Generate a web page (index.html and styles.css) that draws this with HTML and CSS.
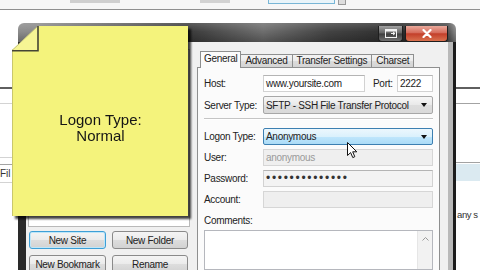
FILE: index.html
```html
<!DOCTYPE html>
<html lang="en">
	<head>
		<meta charset="UTF-8">
		<meta name="viewport" content="width=device-width, initial-scale=1.0">
		<title>Site Manager</title>
		<link rel="stylesheet" href="styles.css">
	</head>

	<body>
		<div class="desktop">
			<!-- bottom edge of the quickconnect bar behind the dialog -->
			<div class="quickbar">
				<span class="qb-host"></span>
				<span class="qb-label"></span>
				<span class="qb-port"></span>
				<span class="qb-btn"></span>
			</div>

			<div class="app">
				<div class="stub stub-left">
					<div class="hl dark l1"></div>
					<div class="hl light l2"></div>
					<div class="hl light l3"></div>
					<div class="hl mid l4"></div>
					<div class="stub-text">Fil</div>
					<div class="hl light l5"></div>
				</div>
				<div class="stub stub-right">
					<div class="hl dark l1"></div>
					<div class="hl mid l2"></div>
					<div class="hl mid r3"></div>
					<div class="band"></div>
					<div class="stub-text r-text">any s</div>
				</div>
			</div>

			<div class="dialog">
				<div class="titlebar">
					<span class="cbtn restore">
						<svg width="12" height="9" viewBox="0 0 12 9">
							<rect x="0.5" y="0.5" width="11" height="8" fill="none" stroke="#f2f2f2"/>
							<rect x="0.5" y="0.5" width="11" height="2" fill="#f2f2f2"/>
							<path d="M6 4.5 L10 4.5 M8 3 L10 4.5 L8 6" stroke="#f2f2f2" fill="none"/>
						</svg>
					</span>
					<span class="cbtn close">
						<svg width="10" height="9" viewBox="0 0 10 9">
							<path d="M1.5 1 L8.5 8 M8.5 1 L1.5 8" stroke="#fff" stroke-width="2.2" stroke-linecap="round"/>
						</svg>
					</span>
				</div>

				<div class="frame">
					<div class="left-pane">
						<div class="tree"></div>
						<div class="btn-grid">
							<button class="btn default">New Site</button>
							<button class="btn">New Folder</button>
							<button class="btn">New Bookmark</button>
							<button class="btn">Rename</button>
						</div>
					</div>

					<div class="right-pane">
						<div class="tabs">
							<span class="tab active">General</span>
							<span class="tab">Advanced</span>
							<span class="tab">Transfer Settings</span>
							<span class="tab">Charset</span>
						</div>
						<div class="tab-panel">
							<div class="row">
								<span class="lbl">Host:</span>
								<span class="input host">www.yoursite.com</span>
								<span class="port-lbl">Port:</span>
								<span class="input">2222</span>
							</div>
							<div class="row tall">
								<span class="lbl">Server Type:</span>
								<span class="select">SFTP - SSH File Transfer Protocol<i class="arrow"></i></span>
							</div>
							<div class="sep"></div>
							<div class="row">
								<span class="lbl">Logon Type:</span>
								<span class="select hover">Anonymous<i class="arrow"></i></span>
							</div>
							<div class="row">
								<span class="lbl">User:</span>
								<span class="input disabled">anonymous</span>
							</div>
							<div class="row">
								<span class="lbl">Password:</span>
								<span class="input soft pw">••••••••••••••</span>
							</div>
							<div class="row">
								<span class="lbl">Account:</span>
								<span class="input disabled"></span>
							</div>
							<div class="comments-lbl">Comments:</div>
							<div class="textarea">
								<div class="vscroll">
									<svg width="7" height="4" viewBox="0 0 7 4">
										<path d="M0.5 3.5 L3.5 0.5 L6.5 3.5" stroke="#9a9a9a" fill="none"/>
									</svg>
								</div>
							</div>
						</div>
					</div>
				</div>
			</div>

			<div class="note">
				<div class="note-paper">Logon Type:<br>Normal</div>
				<svg class="fold" width="27" height="26" viewBox="0 0 27 26">
					<polygon points="0,24.5 26,0 26,24.5" fill="#f6f594"/>
					<path d="M0 24.5 L26 0" stroke="#b4b27a" stroke-width="0.8"/>
					<path d="M26 0 L26 25.5 M0 24.8 L26.5 24.8" stroke="#454535" stroke-width="1.6"/>
				</svg>
			</div>

			<svg class="cursor" width="11" height="17" viewBox="0 0 11 17">
				<path d="M0.5 0.5 L0.5 13.5 L3.6 10.6 L5.8 15.6 L7.8 14.7 L5.7 9.8 L9.8 9.8 Z" fill="#fff" stroke="#111" stroke-width="1"/>
			</svg>
		</div>
	</body>
</html>
```

FILE: styles.css
```css
* {
	box-sizing: border-box;
}

html, body {
	margin: 0;
}

body {
	font-family: "Liberation Sans", Arial, sans-serif;
	font-size: 10px;
	color: #222;
	background-color: #fff;
	overflow: hidden;
}

.desktop {
	position: relative;
	width: 480px;
	height: 270px;
	overflow: hidden;
}

/* background application */
.quickbar {
	height: 10px;
	display: flex;
	align-items: flex-start;
	background-color: #f6f6f6;
	border-bottom: 1px solid #8f8f8f;
}

.qb-host {
	margin-left: 70px;
	width: 50px;
	height: 3px;
	background-color: #cfcfcf;
}

.qb-label {
	margin-left: 80px;
	width: 30px;
	height: 3px;
	background-color: #d2d2d2;
}

.qb-port {
	margin-left: 38px;
	width: 67px;
	height: 4px;
	border: 1px solid #78b6d6;
	border-top: none;
	background-color: #e9f4f9;
}

.qb-btn {
	margin-left: 3px;
	width: 8px;
	height: 5px;
	border: 1px solid #9a9a9a;
	border-top: none;
	background-color: #dedede;
}

.app {
	display: flex;
	justify-content: space-between;
}

.stub-left {
	width: 12px;
}

.stub-right {
	width: 24px;
}

.hl {
	height: 1px;
}

.hl.dark {
	height: 2px;
	background-color: #5f5f5f;
}

.hl.mid {
	background-color: #a3a3a3;
}

.hl.light {
	background-color: #d3d3d3;
}

.l1 { margin-top: 77px; }
.l2 { margin-top: 14px; }
.l3 { margin-top: 53px; }
.l4 { margin-top: 6px; }
.l5 { margin-top: 3px; }
.r3 { margin-top: 58px; }

.stub-text {
	margin-top: 4px;
	line-height: 10px;
	white-space: nowrap;
	color: #333;
}

.band {
	margin-top: 1px;
	height: 17px;
	background-color: #dbeaf1;
}

.r-text {
	margin-top: 29px;
	padding-left: 1px;
	font-size: 9.5px;
	letter-spacing: -0.4px;
}

/* dialog */
.dialog {
	position: absolute;
	left: 18px;
	top: 23px;
	width: 438px;
	height: 262px;
	display: flex;
	flex-direction: column;
	letter-spacing: -0.3px;
}

.titlebar {
	height: 24px;
	display: flex;
	justify-content: flex-end;
	align-items: flex-start;
	gap: 2px;
	padding: 3px 8px 0 0;
	border-radius: 6px 6px 0 0;
	background:
		linear-gradient(to bottom, rgba(255,255,255,.16), rgba(255,255,255,0) 45%, rgba(0,0,0,.25)),
		linear-gradient(to right, #8d8d8d 0, #8a8a8a 5%, #3b3b3b 39%, #6e6e6e 56%, #434343 71%, #2c2c2c 88%, #4a4a4a 98%, #8a8a8a 100%);
}

.cbtn {
	height: 16px;
	display: flex;
	align-items: center;
	justify-content: center;
	border: 1px solid #1e1e1e;
	border-top: none;
	border-radius: 0 0 4px 4px;
}

.cbtn.restore {
	width: 25px;
	background: linear-gradient(#a2a2a2, #626262 48%, #3c3c3c 52%, #707070);
}

.cbtn.close {
	width: 43px;
	background: linear-gradient(#eaaa9c, #d66b5b 45%, #c33f2a 52%, #d9714f);
}

.frame {
	flex: 1;
	display: flex;
	background-color: #f0f0f0;
	border-left: 8px solid #2a2a2a;
	border-right: 3px solid #1c1c1c;
	padding-right: 5px;
	box-shadow: inset -5px 0 #b9b9b9;
}

.left-pane {
	width: 167px;
	padding: 7px 0 0 2px;
}

.tree {
	width: 162px;
	height: 178px;
	background-color: #fff;
	border: 1px solid #b9b9b9;
}

.btn-grid {
	display: grid;
	grid-template-columns: 77px 76px;
	column-gap: 6px;
	row-gap: 6px;
	margin: 4px 0 0 1px;
}

.btn {
	height: 18px;
	padding: 0;
	font-family: inherit;
	font-size: 10px;
	letter-spacing: inherit;
	color: #222;
	border: 1px solid #8a8a8a;
	border-radius: 3px;
	background: linear-gradient(#f4f4f4, #ebebeb 48%, #dddddd 52%, #d2d2d2);
}

.btn.default {
	border-color: #3e9fd6;
	box-shadow: inset 0 0 0 1px #bfe6f8;
}

.right-pane {
	flex: 1;
	padding: 9px 8px 0 4px;
}

.tabs {
	display: flex;
	align-items: flex-end;
	height: 16px;
	margin-left: 3px;
}

.tab {
	height: 13px;
	padding: 0 4px;
	line-height: 12px;
	white-space: nowrap;
	border: 1px solid #8e8f8f;
	border-left: none;
	border-bottom: none;
	background: linear-gradient(#f3f3f3, #ebebeb 50%, #dcdcdc 51%, #d4d4d4);
}

.tab.active {
	position: relative;
	z-index: 1;
	height: 17px;
	margin-bottom: -1px;
	padding: 0 3px;
	line-height: 14px;
	border-left: 1px solid #8e8f8f;
	background: #fbfbfb;
}

.tab-panel {
	height: 220px;
	padding: 7px 6px 0 6px;
	background-color: #fbfbfb;
	border: 1px solid #8e8f8f;
}

.row {
	display: flex;
	align-items: center;
	height: 17px;
	margin-bottom: 4px;
}

.row.tall {
	height: 18px;
}

.lbl {
	width: 59px;
	flex: none;
	white-space: nowrap;
}

.input {
	flex: 1;
	height: 17px;
	padding: 0 2px;
	line-height: 15px;
	white-space: nowrap;
	overflow: hidden;
	background-color: #fff;
	border: 1px solid #d2d2d2;
	border-top-color: #b4b4b4;
}

.input.host {
	flex: none;
	width: 102px;
}

.port-lbl {
	width: 24px;
	margin-left: 8px;
	flex: none;
}

.input.disabled {
	color: #9a9a9a;
	background-color: #efefef;
	border-color: #d6d6d6;
}

.input.soft {
	background-color: #f3f3f3;
}

.pw {
	font-size: 12px;
	letter-spacing: 1.7px;
	color: #333;
}

.select {
	flex: 1;
	height: 18px;
	display: flex;
	align-items: center;
	justify-content: space-between;
	padding: 0 5px 0 2px;
	white-space: nowrap;
	border: 1px solid #a7a7a7;
	border-radius: 2px;
	background: linear-gradient(#f6f6f6, #e9e9e9 50%, #dddddd 51%, #d9d9d9);
}

.select.hover {
	height: 17px;
	border-color: #3c7fb1;
	background: linear-gradient(#ecf7fd, #dbf1fc 50%, #c0e6fc 51%, #abdbf6);
}

.arrow {
	width: 0;
	height: 0;
	border-left: 3.5px solid transparent;
	border-right: 3.5px solid transparent;
	border-top: 4px solid #111;
}

.sep {
	height: 2px;
	margin: 3px 0 8px;
	border-top: 1px solid #c5c5c5;
	border-bottom: 1px solid #fff;
}

.comments-lbl {
	margin-top: 2px;
	height: 18px;
	line-height: 18px;
}

.textarea {
	height: 40px;
	display: flex;
	justify-content: flex-end;
	background-color: #fff;
	border: 1px solid #b5b7bd;
}

.vscroll {
	width: 15px;
	display: flex;
	justify-content: center;
	padding-top: 6px;
	background-color: #f2f2f2;
	border-left: 1px solid #e6e6e6;
}

/* sticky note laid over the dialog */
.note {
	position: absolute;
	left: 12px;
	top: 26px;
	width: 176px;
	height: 190px;
	filter: drop-shadow(3px 3px 1px rgba(0,0,0,.75));
}

.note-paper {
	height: 100%;
	padding-top: 86px;
	text-align: center;
	font-size: 15px;
	line-height: 16px;
	color: #151515;
	background-color: #f4f37c;
	border-left: 1px solid #c9c76c;
	clip-path: polygon(26px 0, 100% 0, 100% 100%, 0 100%, 0 24px);
}

.fold {
	position: absolute;
	left: 0;
	top: 0;
}

.cursor {
	position: absolute;
	left: 347px;
	top: 142px;
}
```
